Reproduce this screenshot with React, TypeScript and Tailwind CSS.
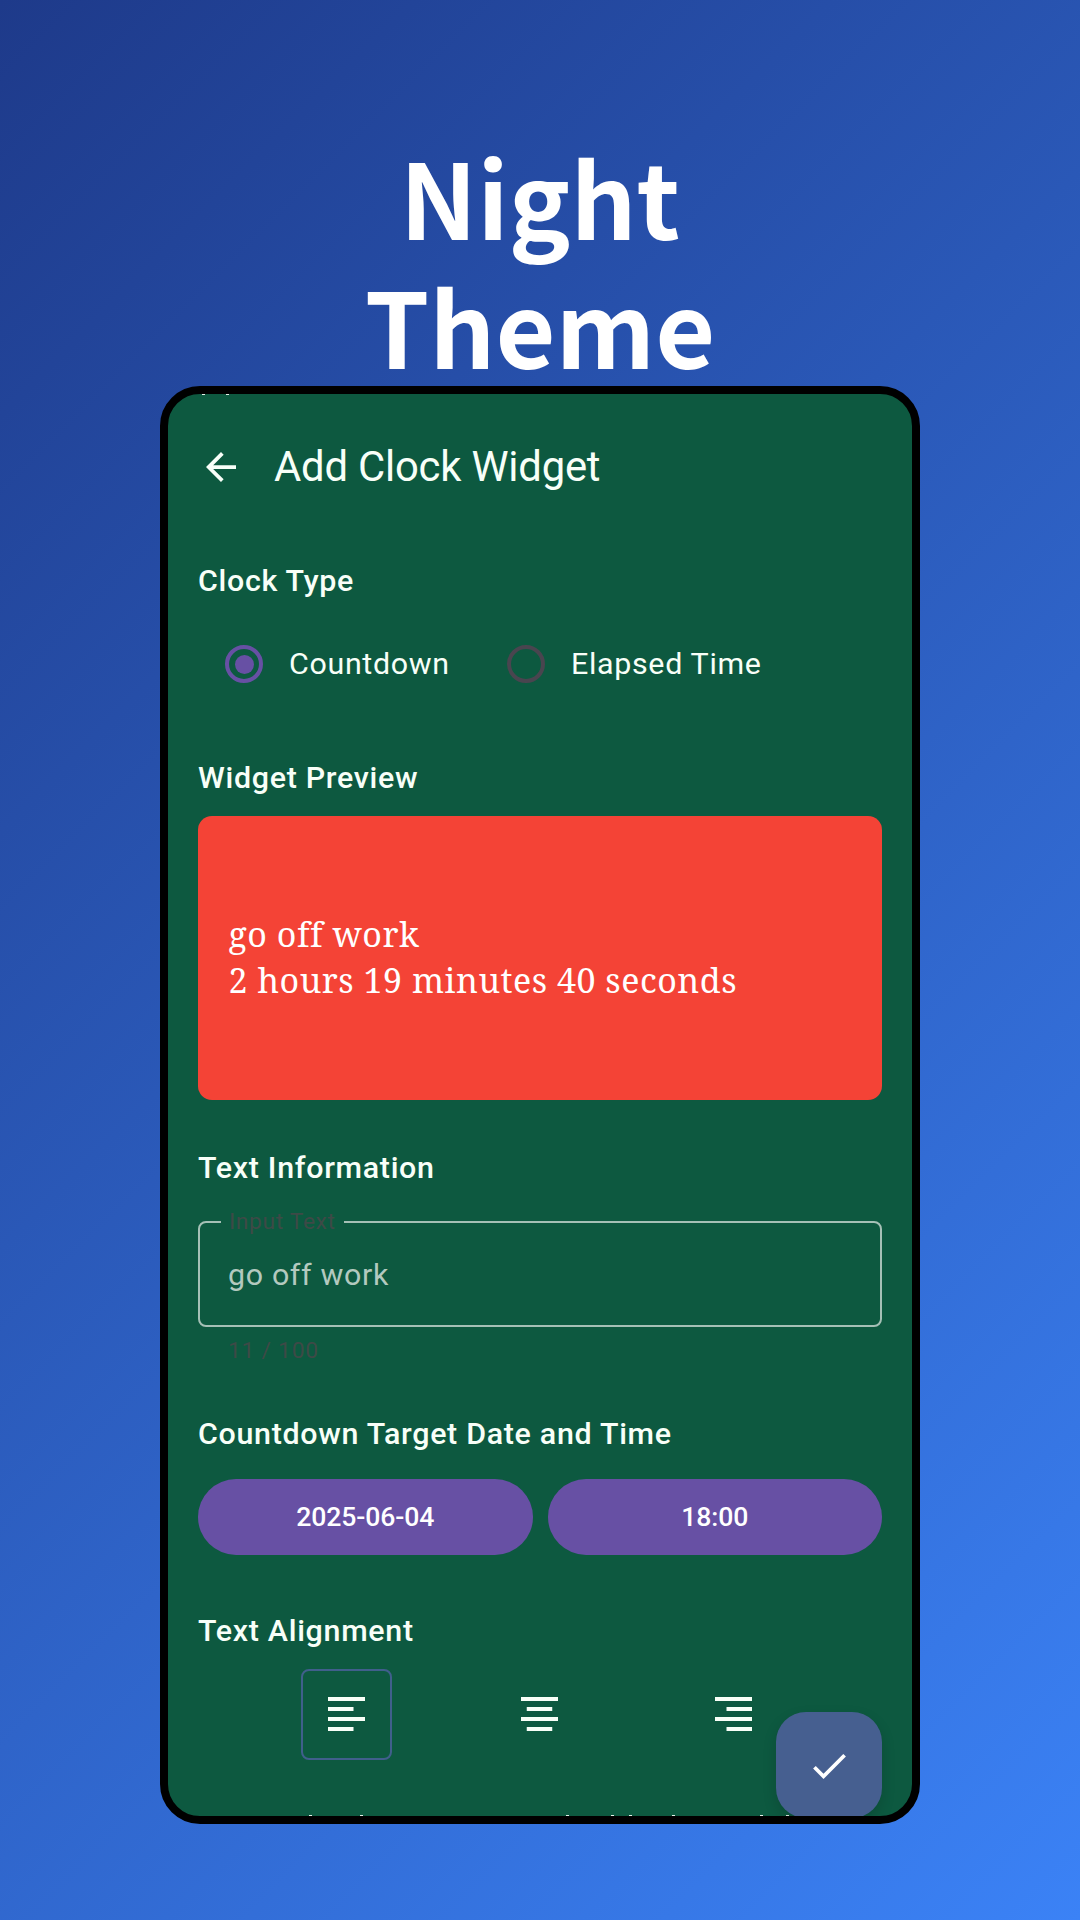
import React from "react";

function Heading({ children, className }: { children: React.ReactNode; className: string }) {
  return <h2 className={`h-9 whitespace-nowrap text-[30.4px] leading-9 font-medium tracking-[0.7px] ${className}`}>{children}</h2>;
}

function Radio({ label, checked, className }: { label: string; checked?: boolean; className: string }) {
  return (
    <div className={`flex items-center ${className}`}>
      <span
        className={`flex size-[38px] items-center justify-center rounded-full border-4 ${checked ? "border-[#6750a4]" : "border-[#49454f]"}`}
      >
        {checked && <span className="size-[19px] rounded-full bg-[#6750a4]" />}
      </span>
      <span className="ml-[26px] whitespace-nowrap text-[30.4px] leading-9 tracking-[0.68px]">{label}</span>
    </div>
  );
}

function AlignIcon({ short }: { short: number }) {
  return (
    <svg viewBox="0 0 37 34" className="mb-px h-[34px] w-[37px]" fill="currentColor">
      <rect x="0" y="0" width="37" height="4" />
      <rect x={short} y="10" width="25.5" height="4" />
      <rect x="0" y="20" width="37" height="4" />
      <rect x={short} y="30" width="25.5" height="4" />
    </svg>
  );
}

// Slivers of the rows scrolled past the edges of the screen.
function EdgeMarks({ xs, className }: { xs: number[]; className: string }) {
  return (
    <svg viewBox="0 0 744 1" className={`absolute left-0 h-px w-[744px] ${className}`} fill="#e4f2ea">
      {xs.map((x) => (
        <rect key={x} x={x} y="0" width="3" height="1" />
      ))}
    </svg>
  );
}

export default function App() {
  return (
    <div className="flex h-[1920px] w-[1080px] flex-col items-center overflow-hidden bg-linear-[135deg] from-[#1e3a8a] to-[#3b82f6] font-['Roboto',sans-serif] text-[#f8fff8]">
      <h1 className="mt-[131px] h-[255px] text-center font-['Noto_Sans_CJK_SC',sans-serif] text-[103.4px] leading-[129px] font-bold text-white">
        Night
        <br />
        Theme
      </h1>
      <main className="relative h-[1438px] w-[760px] shrink-0 overflow-hidden rounded-[40px] border-8 border-black bg-[#0d5940] px-[30px]">
        <EdgeMarks xs={[34, 58]} className="top-0" />
        <EdgeMarks xs={[141, 192, 398, 443, 461, 504, 592, 618]} className="bottom-0" />
        <header className="mt-[46px] flex h-[54px] items-center">
          <svg viewBox="4 4 16 16" className="ml-[8px] size-[30px]" fill="currentColor">
            <path d="M20 11H7.83l5.59-5.59L12 4l-8 8 8 8 1.41-1.41L7.83 13H20v-2z" />
          </svg>
          <span className="ml-[38px] whitespace-nowrap text-[41.8px] leading-[50px] tracking-[-0.2px]">Add Clock Widget</span>
        </header>
        <Heading className="mt-[69px]">Clock Type</Heading>
        <div className="mt-[46px] flex h-[38px] items-center">
          <Radio label="Countdown" checked className="ml-[27px] w-[282px]" />
          <Radio label="Elapsed Time" className="" />
        </div>
        <Heading className="mt-[77px]">Widget Preview</Heading>
        <section className="mt-[20px] flex h-[284px] flex-col justify-center rounded-[14px] bg-[#f44336] pb-[2px] pl-[30.5px] font-['Noto_Serif','DejaVu_Serif_Condensed','DejaVu_Serif',serif] text-[34px] leading-[46px] tracking-[0.52px] text-white">
          <p className="whitespace-nowrap">go off work</p>
          <p className="whitespace-nowrap">2 hours 19 minutes 40 seconds</p>
        </section>
        <Heading className="mt-[50px]">Text Information</Heading>
        <fieldset className="mt-[24px] h-[117px] rounded-[8px] border-2 border-[#a5c0b6] px-[21px]">
          <legend className="h-[23px] px-[8px] text-[22.8px] leading-[23px] tracking-[0.65px] whitespace-nowrap text-[#3d4a47]">Input Text</legend>
          <p className="mt-[24px] ml-[7px] text-[30.4px] leading-9 tracking-[0.65px] whitespace-nowrap text-[#b3c9bf]">go off work</p>
        </fieldset>
        <p className="mt-[10px] ml-[30px] h-[28px] text-[22.8px] leading-[28px] tracking-[0.75px] text-[#3d4a47]">11 / 100</p>
        <Heading className="mt-[51px]">Countdown Target Date and Time</Heading>
        <div className="mt-[27px] grid grid-cols-2 gap-[15px] text-center text-[26.6px] leading-[76px] font-medium tracking-[-0.1px] text-white">
          <button className="h-[76px] rounded-full bg-[#6750a4]">2025-06-04</button>
          <button className="h-[76px] rounded-full bg-[#6750a4]">18:00</button>
        </div>
        <Heading className="mt-[58px]">Text Alignment</Heading>
        <div className="mt-[20px] flex justify-around px-[52px]">
          <button className="flex size-[91px] items-center justify-center rounded-[8px] border-2 border-[#405f8c]">
            <AlignIcon short={0} />
          </button>
          <button className="flex size-[91px] items-center justify-center">
            <AlignIcon short={5.75} />
          </button>
          <button className="flex size-[91px] items-center justify-center">
            <AlignIcon short={11.5} />
          </button>
        </div>
        <button className="absolute top-[1318px] right-[30px] flex size-[106px] items-center justify-center rounded-[30px] bg-[#465f90] text-white shadow-[0_6px_14px_rgba(0,0,0,0.15)]">
          <svg viewBox="3.4 5.6 17.6 13.4" className="mt-[2px] h-[25px] w-[33px]" fill="currentColor">
            <path d="M9 16.17 4.83 12l-1.42 1.41L9 19 21 7l-1.41-1.41z" />
          </svg>
        </button>
      </main>
    </div>
  );
}
